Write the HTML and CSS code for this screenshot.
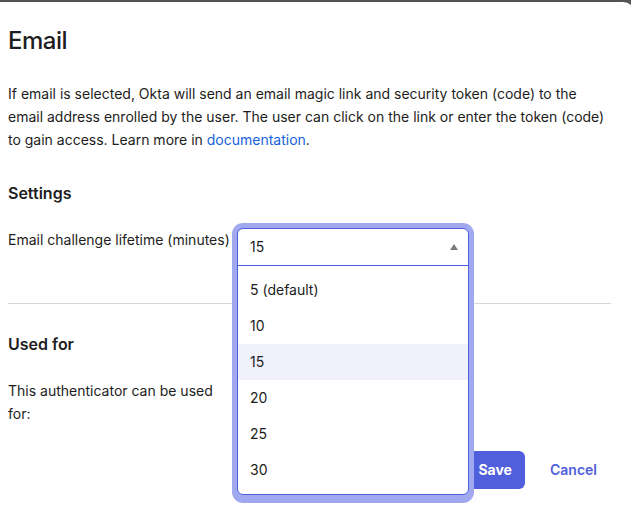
FILE: index.html
```html
<!DOCTYPE html>
<html lang="en">
<head>
<meta charset="utf-8">
<title>Email authenticator</title>
<link rel="stylesheet" href="styles.css">
</head>
<body>
<div class="panel">
  <h1 class="title">Email</h1>
  <p class="desc">If email is selected, Okta will send an email magic link and security token (code) to the email address enrolled by the user. The user can click on the link or enter the token (code) to gain access. Learn more in <a class="link" href="#">documentation</a>.</p>

  <h2 class="section-title">Settings</h2>
  <div class="field-row">
    <label class="field-label">Email challenge lifetime (minutes)</label>
    <div class="combo">
      <div class="combo-popup">
        <div class="combo-control">
          <span class="combo-value">15</span>
          <span class="caret"></span>
        </div>
        <ul class="combo-list">
          <li class="combo-option">5 (default)</li>
          <li class="combo-option">10</li>
          <li class="combo-option is-active">15</li>
          <li class="combo-option">20</li>
          <li class="combo-option">25</li>
          <li class="combo-option">30</li>
        </ul>
      </div>
    </div>
  </div>

  <hr class="divider">

  <h2 class="section-title used-title">Used for</h2>
  <div class="field-row used-row">
    <p class="field-label">This authenticator can be used for:</p>
  </div>

  <div class="actions">
    <button class="btn btn-primary" type="button">Save</button>
    <button class="btn btn-link" type="button">Cancel</button>
  </div>
</div>
</body>
</html>
```

FILE: styles.css
```css
html, body {
  margin: 0;
  padding: 0;
  background: #545454;
  overflow: hidden;
  height: 100%;
}

body {
  font-family: Inter, "Noto Sans", "Liberation Sans", sans-serif;
  color: #1d1d21;
  font-size: 14px;
}

.panel {
  box-sizing: border-box;
  margin-top: 2px;
  margin-right: -4px;
  height: 506px;
  background: #ffffff;
  border-top-right-radius: 12px;
  padding: 24px 24px 0 8px;
}

.title {
  margin: 0;
  font-size: 24px;
  line-height: 30px;
  font-weight: 500;
  letter-spacing: -0.5px;
  color: #1d1d21;
}

.desc {
  margin: 26px 0 0;
  font-size: 14px;
  line-height: 23px;
}

.link {
  color: #1662dd;
  text-decoration: none;
}

.section-title {
  margin: 32px 0 0;
  font-size: 16px;
  line-height: 20px;
  font-weight: 600;
}

.field-row {
  display: flex;
  align-items: flex-start;
  gap: 4px;
  margin-top: 25px;
}

.field-label {
  flex: 0 0 225px;
  margin: 0;
  font-size: 14px;
  line-height: 23px;
}

.combo {
  position: relative;
  width: 232px;
  height: 38px;
}

.combo-popup {
  position: absolute;
  top: 0;
  left: 0;
  width: 100%;
  box-sizing: border-box;
  background: #ffffff;
  border: 1px solid #4f5fdd;
  border-radius: 6px;
  box-shadow: 0 0 0 5px #a0a9ef, 0 3px 0 5px #a0a9ef;
  z-index: 10;
}

.combo-control {
  display: flex;
  align-items: center;
  justify-content: space-between;
  height: 36px;
  padding: 0 10px 0 12px;
  border-bottom: 1px solid #4f5fdd;
  line-height: 20px;
}

.caret {
  width: 0;
  height: 0;
  border-left: 4px solid transparent;
  border-right: 4px solid transparent;
  border-bottom: 6px solid #7a7a82;
  margin-top: -1px;
}

.combo-list {
  list-style: none;
  margin: 0;
  padding: 6px 0;
}

.combo-option {
  height: 36px;
  line-height: 36px;
  padding: 0 12px;
}

.combo-option.is-active {
  background: #f1f1fb;
}

.divider {
  border: 0;
  height: 1px;
  background: #d7d7dc;
  margin: 37px 0 0;
}

.used-title {
  margin-top: 30px;
}

.used-row {
  margin-top: 25px;
}

.actions {
  display: flex;
  justify-content: flex-end;
  gap: 11px;
  margin-top: 26px;
}

.btn {
  height: 38px;
  border: 0;
  border-radius: 6px;
  font-family: inherit;
  font-size: 14px;
  font-weight: 700;
  line-height: 20px;
  cursor: pointer;
}

.btn-primary {
  padding: 0 13px;
  background: #5060dc;
  color: #ffffff;
}

.btn-link {
  padding: 0 14px;
  background: transparent;
  color: #5060dc;
  font-weight: 600;
}
```
